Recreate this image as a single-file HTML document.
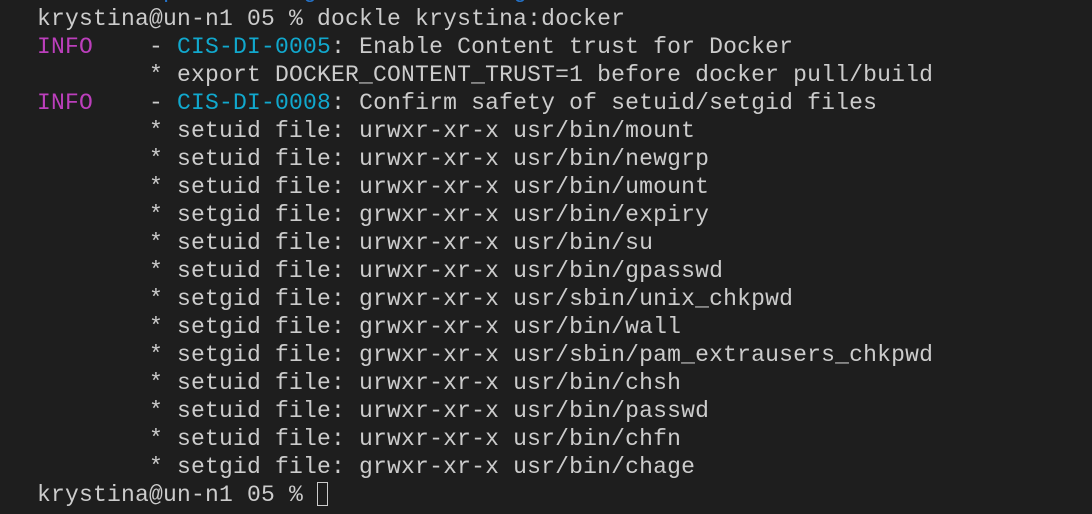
<!DOCTYPE html>
<html><head><meta charset="utf-8"><style>
html,body{margin:0;padding:0;background:#1e1e1e;width:1092px;height:514px;overflow:hidden}
pre{position:absolute;left:37px;top:-23px;margin:0;font-family:"Liberation Mono","DejaVu Sans Mono",monospace;font-size:23px;line-height:28px;letter-spacing:0.2px;color:#cccccc}
.m{color:#bc3fbc}.c{color:#11a8cd}.b{color:#2472c8}
.cur{display:inline-block;width:11px;height:24px;border:1.5px solid #cccccc;vertical-align:-5px;box-sizing:border-box}
</style></head><body>
<pre><span class="b">      https://docs.github.com/sec/guide/aaa/check</span>
krystina@un-n1 05 % dockle krystina:docker
<span class="m">INFO</span>    - <span class="c">CIS-DI-0005</span>: Enable Content trust for Docker
        * export DOCKER_CONTENT_TRUST=1 before docker pull/build
<span class="m">INFO</span>    - <span class="c">CIS-DI-0008</span>: Confirm safety of setuid/setgid files
        * setuid file: urwxr-xr-x usr/bin/mount
        * setuid file: urwxr-xr-x usr/bin/newgrp
        * setuid file: urwxr-xr-x usr/bin/umount
        * setgid file: grwxr-xr-x usr/bin/expiry
        * setuid file: urwxr-xr-x usr/bin/su
        * setuid file: urwxr-xr-x usr/bin/gpasswd
        * setgid file: grwxr-xr-x usr/sbin/unix_chkpwd
        * setgid file: grwxr-xr-x usr/bin/wall
        * setgid file: grwxr-xr-x usr/sbin/pam_extrausers_chkpwd
        * setuid file: urwxr-xr-x usr/bin/chsh
        * setuid file: urwxr-xr-x usr/bin/passwd
        * setuid file: urwxr-xr-x usr/bin/chfn
        * setgid file: grwxr-xr-x usr/bin/chage
krystina@un-n1 05 % <span class="cur"></span></pre>
</body></html>
